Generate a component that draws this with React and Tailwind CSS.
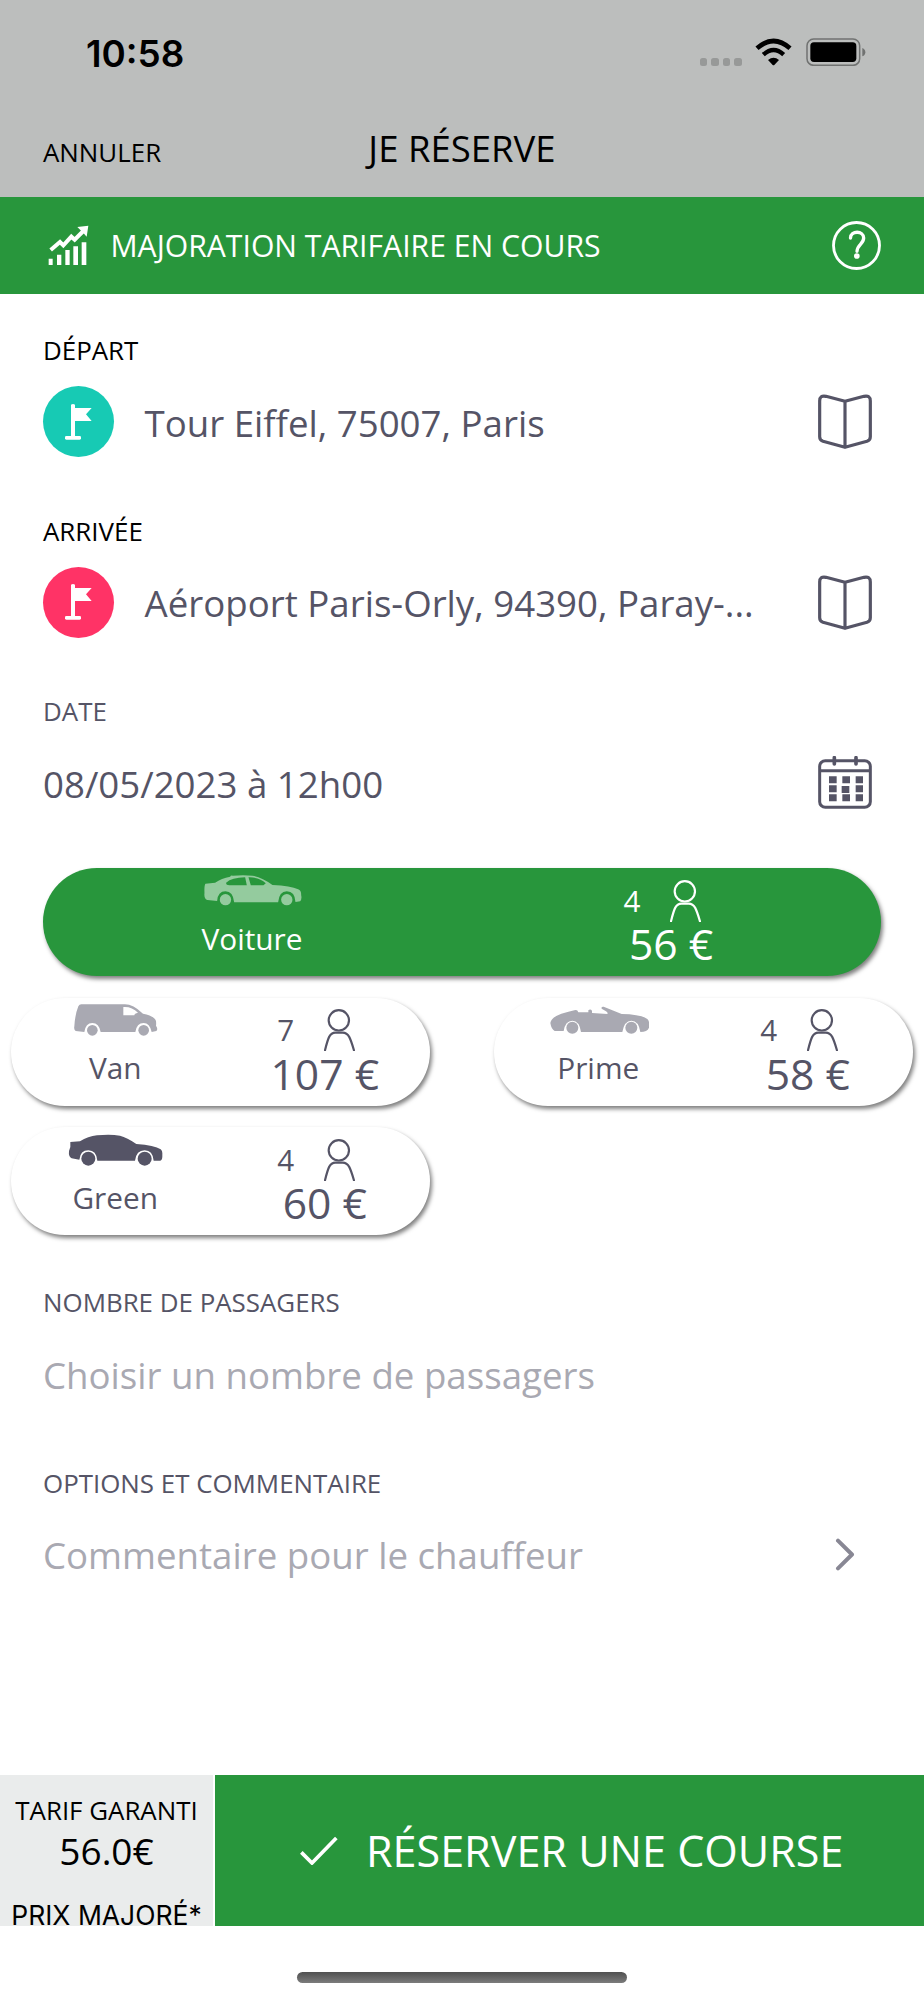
import { useState } from 'react';

const VEHICLES = [
    { id: 'van', name: 'Van', seats: 7, price: '107 €' },
    { id: 'prime', name: 'Prime', seats: 4, price: '58 €' },
    { id: 'green', name: 'Green', seats: 4, price: '60 €' },
];

const StatusIcons = () => (
    <div className="flex">
        <div className="mt-[20px] flex gap-[4px]">
            {[0, 1, 2, 3].map((i) => (
                <span key={i} className="h-[7.6px] w-[7.6px] rounded-[2.5px] bg-[#979998]" />
            ))}
        </div>
        <svg className="ml-[13px] h-[28px] w-[37px]" viewBox="880 115 111 84">
            <path d="M886 146Q936 102 985 146" fill="none" stroke="#000" strokeWidth="14" />
            <path d="M905 165Q936 137 966 165" fill="none" stroke="#000" strokeWidth="13" />
            <path d="M919 181Q936 167 952 181L938 196Q936 198 933 196Z" />
        </svg>
        <svg className="ml-[13.5px] h-[28px] w-[60px]" viewBox="1031 114 180 84">
            <rect x="1034" y="117" width="158" height="79" rx="20" fill="none" stroke="#707271" strokeWidth="4.5" />
            <rect x="1044" y="127" width="138" height="59" rx="11" />
            <path d="M1200 144Q1209 148 1209 156.500Q1209 165 1200 169Z" fill="#707271" />
        </svg>
    </div>
);

const SurgeIcon = () => (
    <svg className="h-[41px] w-[41px]" viewBox="146 672 123 123" fill="#fff">
        <path d="M148 773h12v19h-12zM173 761h13v31h-13zM198 747h13v45h-13zM222 736h14v56h-14zM247 724h14v68h-14z" />
        <path d="M154 747L182 723L192 733L216 707L226 716L252 690" fill="none" stroke="#fff" strokeWidth="12" />
        <path d="M234 678L267 674L262 707L254 698L243 687Z" />
    </svg>
);

const HelpIcon = () => (
    <svg className="h-[49px] w-[49px]" viewBox="1110 662 147 147" fill="none" stroke="#fff">
        <circle cx="1183.500" cy="735.500" r="69" strokeWidth="8.500" />
        <path
            d="M1165.500 713C1166 690 1205 690 1205 713C1205 731 1185 733 1185 753"
            strokeWidth="10"
            strokeLinecap="round"
        />
        <circle cx="1184.500" cy="767" r="8.500" fill="#fff" stroke="none" />
    </svg>
);

const FlagIcon = () => (
    <svg className="h-[36px] w-[27px]" viewBox="201 248 81 108" fill="#fff">
        <path d="M219 250Q225 246 231 250V260H281L264 279L281 299H231V345H219Z" />
        <rect x="201" y="344" width="48" height="11" rx="4" />
    </svg>
);

const BookIcon = () => (
    <svg className="h-[55px] w-[54px]" viewBox="954 222 162 165" fill="none" stroke="#555466" strokeWidth="9.500" strokeLinejoin="round">
        <path d="M1035 244L978 229Q959 225 959 243V350Q959 360 969 364L1035 382L1101 364Q1111 360 1111 350V243Q1111 225 1092 229ZM1035 244V382" />
    </svg>
);

const CalendarIcon = () => (
    <svg className="h-[53px] w-[54px]" viewBox="954 1308 162 159" fill="none" stroke="#555466" strokeWidth="9">
        <rect x="959" y="1322" width="152" height="140" rx="17" />
        <path d="M959 1352H1111" />
        <path d="M1003 1313V1332M1068 1313V1332" strokeWidth="11" strokeLinecap="round" />
        <path
            d="M987 1369h23v21h-23zM1027 1369h23v21h-23zM1067 1369h22v21h-22zM987 1396h23v21h-23zM1025 1398h23v21h-23zM1067 1396h22v21h-22zM987 1423h23v21h-23zM1027 1423h23v21h-23zM1067 1423h22v21h-22z"
            fill="#555466"
            stroke="none"
        />
    </svg>
);

const ChevronIcon = () => (
    <svg className="mx-[17px] h-[33px] w-[20px]" viewBox="1119 115 60 99" fill="none" stroke="#888794" strokeWidth="12" strokeLinecap="round" strokeLinejoin="round">
        <path d="M1128 123L1170 164.500L1128 206" />
    </svg>
);

const PersonIcon = () => (
    <svg className="h-[42px] w-[31px]" viewBox="972 476 93 126" fill="none" stroke="currentColor" strokeWidth="6.500">
        <circle cx="1016.500" cy="510" r="30.500" />
        <path d="M975 600C984 563 989 547 1006 547H1028C1046 547 1051 563 1062 600" strokeLinecap="round" />
    </svg>
);

const CarIcon = ({ type }) => {
    if (type === 'voiture') {
        return (
            <svg className="h-[32px] w-[100px]" viewBox="608.6 74 300 96">
                <path
                    d="M616 100L645 97Q664 84 690 79Q692 74 698 76Q730 73 757 76Q785 80 817 104Q872 106 894 117Q904 121 903 134Q906 146 900 153L886 155Q884 123 860 123Q837 123 834 156H702Q699 123 676 123Q653 123 651 152L622 149Q611 146 613 128Q612 104 616 100Z"
                    fill="#94cb9e"
                />
                <path d="M678 97Q695 82 735 81L740 105H688Q677 105 678 97ZM745 81Q778 80 797 99L790 105H752Z" fill="#28963c" />
                <circle cx="676" cy="148" r="17" fill="#94cb9e" />
                <circle cx="860" cy="148" r="17" fill="#94cb9e" />
            </svg>
        );
    }
    if (type === 'van') {
        return (
            <svg className="h-[32px] w-[100px]" viewBox="197 462 300 96" fill="#a9a9b2">
                <path d="M243 463H374Q398 463 428 491Q462 498 467 513Q468 522 467 527Q474 538 468 543L454 546Q448 519 430 519Q409 519 405 546H301Q296 519 276 519Q256 519 252 546L226 543Q220 540 222 529Q224 494 234 469Q237 463 243 463Z" />
                <path d="M369 471Q394 469 413 488Q402 490 402 496H369Z" fill="#fff" />
                <circle cx="276" cy="541" r="16" />
                <circle cx="430" cy="541" r="16" />
            </svg>
        );
    }
    if (type === 'prime') {
        return (
            <svg className="h-[32px] w-[100px]" viewBox="260 462 300 96" fill="#a9a9b2">
                <path d="M264 519Q267 502 297 491Q320 485 336 481Q345 477 348 487H378V481Q384 476 389 482V489L435 492Q438 489 431 484L418 476Q416 469 424 470L478 492Q535 493 555 507Q562 514 561 530Q557 546 534 546Q529 512 507 512Q486 512 480 546H356Q351 512 330 512Q309 512 304 543H277Q267 538 264 519Z" />
                <circle cx="330" cy="533" r="18" />
                <circle cx="507" cy="533" r="18" />
            </svg>
        );
    }
    return (
        <svg className="h-[32px] w-[100px]" viewBox="197 850 300 96" fill="#555466">
            <path d="M210 874L239 872Q263 857 290 854Q330 850 359 855Q380 860 408 880Q463 884 481 896Q487 901 486 914Q487 928 480 930H460Q457 899 433 899Q408 899 404 930H291Q288 899 264 899Q240 899 237 927L214 923Q204 918 206 901Q212 890 210 874Z" />
            <circle cx="264" cy="924" r="21" />
            <circle cx="433" cy="924" r="21" />
        </svg>
    );
};

const VehiclePill = ({ type, name, seats, price, selected, onSelect }) => (
    <button
        type="button"
        onClick={onSelect}
        className={
            selected
                ? 'mx-[32px] flex h-[108px] w-[838px] items-start rounded-full bg-[#28963c] text-white shadow-[2px_3px_4px_rgba(0,0,0,0.5)]'
                : 'flex h-[108px] w-[419px] items-start rounded-full bg-white text-[#555466] shadow-[2px_3px_4px_rgba(0,0,0,0.5)]'
        }
    >
        <div className="flex w-1/2 flex-col items-center pt-[6.5px]">
            <CarIcon type={type} />
            <span className="mt-[12px] pr-px text-[29.8px] leading-[40px]">{name}</span>
        </div>
        <div className="flex w-1/2 flex-col items-center pt-[11.5px]">
            <div className="flex items-center gap-[28px] pr-[20px]">
                <span className="w-[20px] text-center text-[29.6px] leading-[42px]">{seats}</span>
                <PersonIcon />
            </div>
            <span className="-mt-[1.5px] pr-px text-[42.6px] leading-[46px]">{price}</span>
        </div>
    </button>
);

const Field = ({ label, labelClass, children }) => (
    <section className="h-[180.7px] pl-[43px] pr-[52px]">
        <h2 className={`text-[25.9px] leading-[40px] ${labelClass}`}>{label}</h2>
        <div className="flex h-[103px] items-center justify-between">{children}</div>
    </section>
);

const Address = ({ circleClass, text }) => (
    <div className="flex items-center gap-[30.5px]">
        <div className={`flex h-[71px] w-[71px] items-center justify-center rounded-full ${circleClass}`}>
            <FlagIcon />
        </div>
        <span className="pt-[2px] text-[36.65px] leading-[52px] whitespace-nowrap text-[#555466]">{text}</span>
    </div>
);

const App = () => {
    const [selected, setSelected] = useState('voiture');

    return (
        <div className="flex h-[2000px] w-[924px] flex-col overflow-hidden bg-white font-['Open_Sans',sans-serif]">
            <header className="h-[197px] shrink-0 bg-[#bcbebd]">
                <div className="flex h-[106px] items-start justify-between pl-[86px] pr-[58.5px] pt-[38px]">
                    <span className="pt-px font-['Inter',sans-serif] text-[36.8px] leading-[30px] font-semibold">10:58</span>
                    <StatusIcons />
                </div>
                <div className="grid grid-cols-3 items-start pl-[43px] pr-[43px] pt-[16px]">
                    <span className="pt-[4px] text-[25.9px] leading-[52px]">ANNULER</span>
                    <h1 className="text-center text-[36.5px] leading-[52px] whitespace-nowrap">JE RÉSERVE</h1>
                </div>
            </header>

            <div className="flex h-[97px] shrink-0 items-center bg-[#28963c] pl-[48px] pr-[43px] text-white">
                <SurgeIcon />
                <span className="ml-[21.5px] grow pt-px text-[30.15px] leading-[40px]">MAJORATION TARIFAIRE EN COURS</span>
                <HelpIcon />
            </div>

            <main className="flex grow flex-col pt-[36px]">
                <Field label="DÉPART" labelClass="text-black">
                    <Address circleClass="bg-[#17cab4]" text="Tour Eiffel, 75007, Paris" />
                    <BookIcon />
                </Field>
                <Field label="ARRIVÉE" labelClass="text-black">
                    <Address circleClass="bg-[#ff3366]" text="Aéroport Paris-Orly, 94390, Paray-..." />
                    <BookIcon />
                </Field>
                <Field label="DATE" labelClass="text-[#555466]">
                    <span className="pt-[3px] text-[36.65px] text-[#555466]">08/05/2023 à 12h00</span>
                    <CalendarIcon />
                </Field>

                <div className="-mt-[4px] flex h-[414px] flex-wrap content-start justify-between gap-y-[21.500px] px-[11px]">
                    <VehiclePill
                        type="voiture"
                        name="Voiture"
                        seats={4}
                        price="56 €"
                        selected={selected === 'voiture'}
                        onSelect={() => setSelected('voiture')}
                    />
                    {VEHICLES.map((v) => (
                        <VehiclePill
                            key={v.id}
                            type={v.id}
                            name={v.name}
                            seats={v.seats}
                            price={v.price}
                            selected={selected === v.id}
                            onSelect={() => setSelected(v.id)}
                        />
                    ))}
                </div>

                <Field label="NOMBRE DE PASSAGERS" labelClass="text-[#555466]">
                    <span className="pt-[3px] text-[36.65px] text-[#a9a9b2]">Choisir un nombre de passagers</span>
                </Field>
                <Field label="OPTIONS ET COMMENTAIRE" labelClass="text-[#555466]">
                    <span className="pt-[3px] text-[36.65px] text-[#a9a9b2]">Commentaire pour le chauffeur</span>
                    <ChevronIcon />
                </Field>
            </main>

            <footer className="h-[225px] shrink-0">
                <div className="flex h-[151px] gap-[2px]">
                    <div className="flex w-[213px] flex-col items-center bg-[#eaecec] pt-[15px] whitespace-nowrap">
                        <span className="text-[25.9px] leading-[40px]">TARIF GARANTI</span>
                        <span className="text-[37px] leading-[42px]">56.0€</span>
                        <span className="mt-[24px] font-['Inter',sans-serif] text-[26.5px] leading-[38px]">PRIX MAJORÉ*</span>
                    </div>
                    <button type="button" className="flex grow items-center bg-[#28963c] pl-[85px] text-white">
                        <svg className="h-[29px] w-[38px]" viewBox="901 231 114 87" fill="none" stroke="#fff" strokeWidth="11">
                            <path d="M905 280L937 312L1010 237" />
                        </svg>
                        <span className="ml-[28px] pt-px text-[43.1px] leading-[52px]">RÉSERVER UNE COURSE</span>
                    </button>
                </div>
                <div className="mx-auto mt-[46px] h-[11px] w-[330px] rounded-full bg-linear-to-b from-[#505050] to-[#7c7c7c]" />
            </footer>
        </div>
    );
};

export default App;
